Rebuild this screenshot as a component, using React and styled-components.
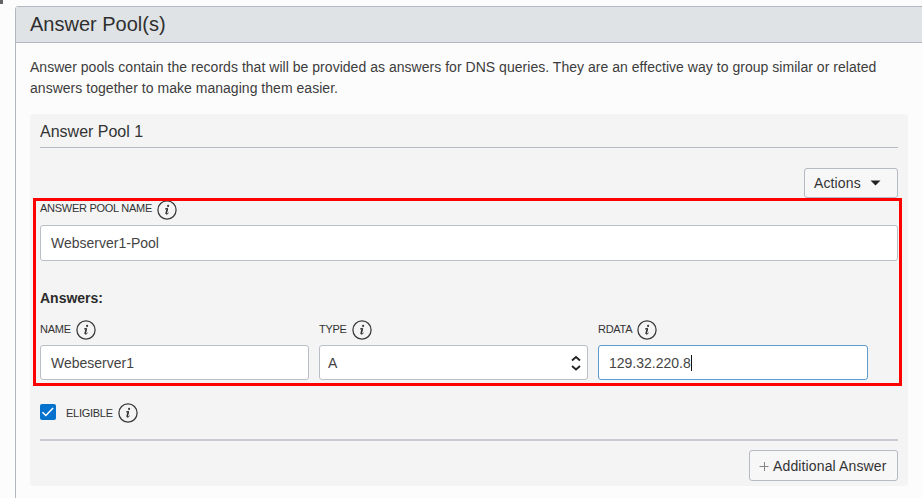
import React from "react";
import styled, { createGlobalStyle } from "styled-components";

const GlobalStyle = createGlobalStyle`
  * { box-sizing: border-box; }
  html, body { margin: 0; height: 498px; overflow: hidden; background: #fcfcfc; }
  body { font-family: "Liberation Sans", Arial, sans-serif; font-size: 14px; color: #3c3c3c; }
`;

const Page = styled.main`
  position: relative;
  width: 922px;
  height: 498px;
  padding: 6px 0 0 15px;
  overflow: hidden;
`;

const CornerMark = styled.span`
  position: absolute;
  left: 0;
  top: 0;
  width: 3px;
  height: 4px;
  background: #626468;
`;

const Panel = styled.section`
  height: 520px;
  width: 930px;
  border: 1px solid #b2b7c3;
  border-radius: 3px 0 0 0;
`;

const PanelHeader = styled.h1`
  margin: 0;
  height: 36px;
  padding-left: 14px;
  border-bottom: 1px solid #b2b7c3;
  background: #dfe3e6;
  color: #2f2f2f;
  font-size: 20px;
  font-weight: 400;
  line-height: 35px;
`;

const Description = styled.p`
  margin: 14px 0 0 14px;
  width: 870px;
  height: 57px;
  line-height: 21px;
  letter-spacing: 0.03px;
`;

const Pool = styled.section`
  position: relative;
  display: flex;
  flex-direction: column;
  width: 878px;
  height: 372px;
  margin-left: 14px;
  padding: 0 10px;
  border-radius: 3px;
  background: #f4f4f4;
`;

const PoolTitle = styled.h2`
  margin: 0;
  height: 34px;
  flex: none;
  border-bottom: 1px solid #b4b9c2;
  color: #333;
  font-size: 16px;
  font-weight: 400;
  line-height: 35px;
`;

const ButtonRow = styled.div`
  display: flex;
  justify-content: flex-end;
  flex: none;
  padding-top: ${(p) => p.$top}px;
`;

const Button = styled.button`
  display: flex;
  align-items: center;
  width: ${(p) => p.$width}px;
  height: ${(p) => p.$height}px;
  padding: 0 9px;
  gap: ${(p) => p.$gap}px;
  border: 1px solid #b5bac4;
  border-radius: 3px;
  background: #f7f7f7;
  color: #333;
  font: inherit;
  letter-spacing: 0.13px;
  white-space: nowrap;
`;

const LabelRow = styled.div`
  display: flex;
  align-items: center;
  height: ${(p) => p.$height}px;
  padding-bottom: ${(p) => p.$bottom}px;
  flex: none;
  color: #333;
`;

const LabelText = styled.label`
  margin-right: 5px;
  padding-bottom: ${(p) => p.$lift}px;
  font-size: 11px;
  line-height: 14px;
  letter-spacing: -0.27px;
`;

const Control = styled.div`
  display: flex;
  align-items: center;
  justify-content: ${(p) => (p.$select ? "space-between" : "flex-start")};
  height: ${(p) => p.$height || 35}px;
  padding: 0 ${(p) => (p.$select ? 6 : 10)}px 0 ${(p) => (p.$select ? 8 : 10)}px;
  border: 1px solid ${(p) => (p.$focused ? "#5b9bd0" : "#b9bec7")};
  border-radius: 3px;
  background: #fff;
  color: #444;
`;

const Caret = styled.span`
  width: 1px;
  height: 16px;
  background: #111;
`;

const AnswersTitle = styled.h3`
  margin: 29px 0 0;
  height: 16px;
  flex: none;
  color: #2b2b2b;
  font-size: 14px;
  line-height: 16px;
`;

const Fields = styled.div`
  display: grid;
  grid-template-columns: 269px 269px 270px;
  column-gap: 10px;
  flex: none;
  margin-top: 9px;
`;

const EligibleRow = styled.div`
  display: flex;
  align-items: center;
  height: 61px;
  padding-top: 6px;
  gap: 10px;
  flex: none;
  border-bottom: 2px solid #c8ccd2;
`;

const Checkbox = styled.span`
  display: grid;
  place-items: center;
  width: 16px;
  height: 16px;
  margin-bottom: 2px;
  border-radius: 2px;
  background: #0572ce;
`;

const Highlight = styled.div`
  position: absolute;
  left: 3px;
  top: 84px;
  width: 869px;
  height: 188px;
  border: 3px solid #fe0000;
  pointer-events: none;
`;

const InfoIcon = () => (
  <svg width="20" height="20" viewBox="0 0 20 20" fill="none">
    <circle cx="10" cy="10" r="9.1" stroke="#383838" strokeWidth="1.25" />
    <circle cx="11.1" cy="5.9" r="1.05" fill="#333" />
    <path d="M8 9 10.6 8.3 9.2 13.6Q9 14.6 10 14.1L11.6 12.8" stroke="#333" strokeWidth="1" />
    <path d="M10.3 8.7 9 13.7" stroke="#333" strokeWidth="1.5" />
  </svg>
);

const FieldLabel = ({ children, height = 30, bottom = 0, lift = 2 }) => (
  <LabelRow $height={height} $bottom={bottom}>
    <LabelText $lift={lift}>{children}</LabelText>
    <InfoIcon />
  </LabelRow>
);

export default function App() {
  return (
    <Page>
      <GlobalStyle />
      <CornerMark />
      <Panel>
        <PanelHeader>Answer Pool(s)</PanelHeader>
        <Description>
          Answer pools contain the records that will be provided as answers for DNS queries. They are an effective way to group similar or related
          <br />
          answers together to make managing them easier.
        </Description>
        <Pool>
          <PoolTitle>Answer Pool 1</PoolTitle>
          <ButtonRow $top={20}>
            <Button $width={94} $height={30} $gap={9}>
              Actions
              <svg width="11" height="6" viewBox="0 0 11 6">
                <path d="M.5.5h10l-5 5z" fill="#222" />
              </svg>
            </Button>
          </ButtonRow>
          <FieldLabel height={27} bottom={3} lift={4}>ANSWER POOL NAME</FieldLabel>
          <Control $height={36}>Webserver1-Pool</Control>
          <AnswersTitle>Answers:</AnswersTitle>
          <Fields>
            <div>
              <FieldLabel>NAME</FieldLabel>
              <Control>Webeserver1</Control>
            </div>
            <div>
              <FieldLabel>TYPE</FieldLabel>
              <Control $select>
                A
                <svg width="10" height="16" viewBox="0 0 10 16" fill="none" stroke="#222" strokeWidth="1.8">
                  <path d="M1 5.5 5 2l4 3.5M1 11l4 3.5L9 11" />
                </svg>
              </Control>
            </div>
            <div>
              <FieldLabel>RDATA</FieldLabel>
              <Control $focused>129.32.220.8<Caret /></Control>
            </div>
          </Fields>
          <EligibleRow>
            <Checkbox>
              <svg width="14" height="12" viewBox="0 0 14 12" fill="none">
                <path d="m1.5 6.2 3.4 3.3 7.2-7.4" stroke="#fff" strokeWidth="1.5" />
              </svg>
            </Checkbox>
            <FieldLabel height={20} lift={0}>ELIGIBLE</FieldLabel>
          </EligibleRow>
          <ButtonRow $top={9}>
            <Button $width={149} $height={31} $gap={4}>
              <svg width="10" height="10" viewBox="0 0 10 10" stroke="#858585">
                <path d="M.5 5.5h9M5.5 1v9" />
              </svg>
              Additional Answer
            </Button>
          </ButtonRow>
          <Highlight />
        </Pool>
      </Panel>
    </Page>
  );
}
